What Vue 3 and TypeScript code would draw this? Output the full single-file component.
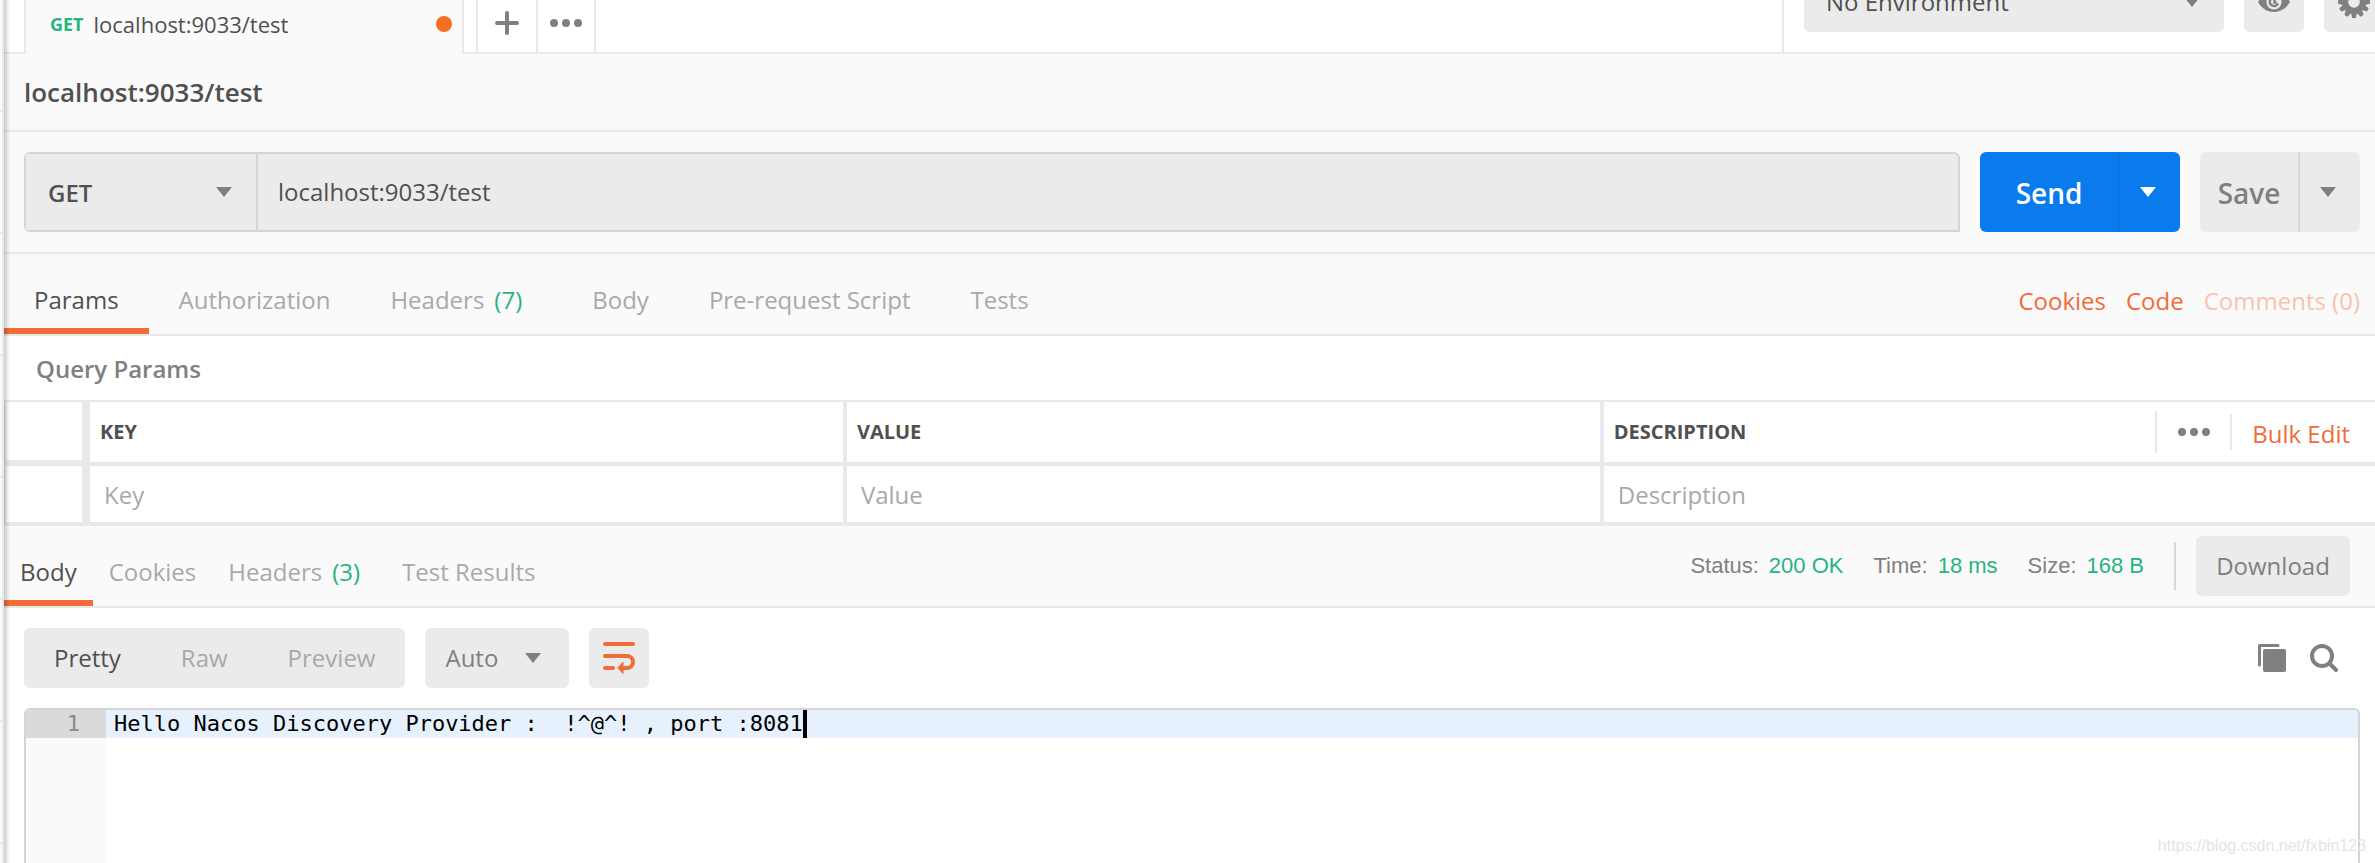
<script setup lang="ts">
import { ref } from 'vue'

interface Tab { label: string; count?: number }

const requestTabs: Tab[] = [
  { label: 'Params' },
  { label: 'Authorization' },
  { label: 'Headers', count: 7 },
  { label: 'Body' },
  { label: 'Pre-request Script' },
  { label: 'Tests' },
]
const responseTabs: Tab[] = [
  { label: 'Body' },
  { label: 'Cookies' },
  { label: 'Headers', count: 3 },
  { label: 'Test Results' },
]
const viewModes = ['Pretty', 'Raw', 'Preview']
const stats = [
  { name: 'Status:', value: '200 OK' },
  { name: 'Time:', value: '18 ms' },
  { name: 'Size:', value: '168 B' },
]

const activeRequestTab = ref('Params')
const activeResponseTab = ref('Body')
const viewMode = ref('Pretty')
const method = ref('GET')
const url = ref('localhost:9033/test')
const environment = ref('No Environment')
const format = ref('Auto')
const lines = ['Hello Nacos Discovery Provider :  !^@^! , port :8081']
</script>

<template>
  <div class="app">
    <aside class="sidebar" aria-hidden="true"></aside>
    <main class="main">
      <header class="topbar">
        <div class="tab-lead"></div>
        <button class="file-tab">
          <span class="verb">GET</span>
          <span class="file-name">localhost:9033/test</span>
          <span class="dirty"></span>
        </button>
        <div class="tab-gap"></div>
        <button class="tab-btn" aria-label="New tab">
          <svg width="24" height="24" viewBox="0 0 24 24"><path d="M12 2v20M2 12h20" stroke="#808080" stroke-width="4" stroke-linecap="round" /></svg>
        </button>
        <button class="tab-btn" aria-label="More tabs">
          <svg width="32" height="8" viewBox="0 0 32 8" fill="#808080"><circle cx="4" cy="4" r="4" /><circle cx="16" cy="4" r="4" /><circle cx="28" cy="4" r="4" /></svg>
        </button>
        <div class="tab-fill"></div>
        <div class="env">
          <div class="select env-select">
            <select v-model="environment" aria-label="Environment"><option>No Environment</option></select>
            <svg class="caret" width="16" height="10" viewBox="0 0 16 10"><path d="M0 0h16l-8 10z" /></svg>
          </div>
          <button class="icon-btn" aria-label="Environment quick look">
            <svg width="32" height="24" viewBox="0 0 32 24"><path d="M0 12C4 5 10 2 16 2s12 3 16 10c-4 7-10 10-16 10S4 19 0 12z" fill="#808080" /><circle cx="16" cy="12" r="7.500" fill="#ebebeb" /><path d="M14 8a4.300 4.300 0 1 0 6 5.500M16.500 9v3.500h2" fill="none" stroke="#808080" stroke-width="2.500" /></svg>
          </button>
          <button class="icon-btn" aria-label="Settings">
            <svg width="32" height="32" viewBox="-16 -16 32 32" fill="#808080"><circle r="8.800" fill="none" stroke="#808080" stroke-width="6" /><path v-for="n in 12" :key="n" d="M-3-11h6L1.800-16h-3.600z" :transform="`rotate(${n * 30})`" /></svg>
          </button>
        </div>
      </header>

      <h1 class="title">localhost:9033/test</h1>

      <form class="request" @submit.prevent>
        <div class="url-box">
          <div class="select method">
            <select v-model="method" aria-label="Method"><option>GET</option><option>POST</option></select>
            <svg class="caret" width="16" height="10" viewBox="0 0 16 10"><path d="M0 0h16l-8 10z" /></svg>
          </div>
          <input v-model="url" class="url" type="text" aria-label="Request URL" />
        </div>
        <div class="split send">
          <button type="submit" class="split-main">Send</button>
          <button type="button" class="split-more" aria-label="Send options">
            <svg width="16" height="10" viewBox="0 0 16 10"><path d="M0 0h16l-8 10z" /></svg>
          </button>
        </div>
        <div class="split save">
          <button type="button" class="split-main">Save</button>
          <button type="button" class="split-more" aria-label="Save options">
            <svg width="16" height="10" viewBox="0 0 16 10"><path d="M0 0h16l-8 10z" /></svg>
          </button>
        </div>
      </form>

      <nav class="tabs request-tabs">
        <button v-for="t in requestTabs" :key="t.label" class="tab" :class="{ active: t.label === activeRequestTab }" @click="activeRequestTab = t.label">
          {{ t.label }}<span v-if="t.count" class="count">({{ t.count }})</span>
        </button>
        <div class="links">
          <a href="#cookies">Cookies</a>
          <a href="#code">Code</a>
          <a href="#comments" class="faded">Comments (0)</a>
        </div>
      </nav>

      <section class="params">
        <h2 class="params-title">Query Params</h2>
        <table class="grid">
          <colgroup><col class="c-check" /><col class="c-key" /><col class="c-key" /><col /></colgroup>
          <thead>
            <tr>
              <th class="check"></th>
              <th>KEY</th>
              <th>VALUE</th>
              <th>
                <div class="desc-head">
                  <span>DESCRIPTION</span>
                  <button class="dots" aria-label="Column options">
                    <svg width="32" height="10" viewBox="0 0 32 10" fill="#808080"><circle cx="4" cy="5" r="4" /><circle cx="16" cy="5" r="4" /><circle cx="28" cy="5" r="4" /></svg>
                  </button>
                  <a class="bulk" href="#bulk">Bulk Edit</a>
                </div>
              </th>
            </tr>
          </thead>
          <tbody>
            <tr>
              <td class="check"></td>
              <td><input type="text" placeholder="Key" aria-label="Key" /></td>
              <td><input type="text" placeholder="Value" aria-label="Value" /></td>
              <td><input type="text" placeholder="Description" aria-label="Description" /></td>
            </tr>
          </tbody>
        </table>
      </section>

      <nav class="tabs response-tabs">
        <button v-for="t in responseTabs" :key="t.label" class="tab" :class="{ active: t.label === activeResponseTab }" @click="activeResponseTab = t.label">
          {{ t.label }}<span v-if="t.count" class="count">({{ t.count }})</span>
        </button>
        <dl class="stats">
          <div v-for="s in stats" :key="s.name" class="stat"><dt>{{ s.name }}</dt><dd>{{ s.value }}</dd></div>
        </dl>
        <span class="divider"></span>
        <button class="download">Download</button>
      </nav>

      <section class="response">
        <div class="toolbar">
          <div class="modes">
            <button v-for="m in viewModes" :key="m" :class="{ active: m === viewMode }" @click="viewMode = m">{{ m }}</button>
          </div>
          <div class="select format">
            <select v-model="format" aria-label="Format"><option>Auto</option><option>JSON</option></select>
            <svg class="caret" width="16" height="10" viewBox="0 0 16 10"><path d="M0 0h16l-8 10z" /></svg>
          </div>
          <button class="icon-btn wrap" aria-label="Wrap lines">
            <svg width="32" height="32" viewBox="0 0 32 32" fill="none" stroke="#f26b3a" stroke-width="4" stroke-linecap="round"><path d="M2 2h28M2 14h22a6 6 0 0 1 0 12h-4M2 26h8" /><path d="M20 20.500v11l-5-5.500z" fill="#f26b3a" stroke-width="1" stroke-linejoin="round" /></svg>
          </button>
          <div class="tools">
            <button aria-label="Copy">
              <svg width="28" height="28" viewBox="0 0 28 28"><path d="M1.500 21V1.500H20" fill="none" stroke="#808080" stroke-width="3" stroke-linecap="round" stroke-linejoin="round" /><rect x="5" y="5" width="23" height="23" rx="2" fill="#808080" /></svg>
            </button>
            <button aria-label="Search">
              <svg width="28" height="28" viewBox="0 0 28 28" fill="none" stroke="#808080" stroke-width="4" stroke-linecap="round"><circle cx="12" cy="12" r="10" /><path d="M20 20l6 6" /></svg>
            </button>
          </div>
        </div>
        <div class="editor">
          <div class="gutter"><div v-for="(_, i) in lines" :key="i" class="num">{{ i + 1 }}</div></div>
          <div class="code"><div v-for="(l, i) in lines" :key="i" class="line">{{ l }}<span class="cursor"></span></div></div>
        </div>
      </section>
    </main>
    <div class="watermark">https://blog.csdn.net/fxbin123</div>
  </div>
</template>

<style>
html, body { margin: 0; height: 100%; overflow: hidden; }
#app { height: 100%; }
</style>

<style scoped>
.app {
  --line: #e9e9e9;
  --panel: #fafafa;
  --control: #ebebeb;
  --ink: #505050;
  --mid: #808080;
  --soft: #a9a9a9;
  --orange: #f26b3a;
  --green: #26b47f;
  position: relative;
  display: flex;
  height: 100vh;
  overflow: hidden;
  background: #fff;
  color: var(--ink);
  font-family: "Open Sans", "Noto Sans", sans-serif;
  font-size: 24px;
  line-height: 32px;
}
*, *::before, *::after { box-sizing: border-box; }
button, input, select { font: inherit; color: inherit; border: 0; background: none; padding: 0; margin: 0; outline: 0; border-radius: 0; }
select { appearance: none; width: 100%; height: 100%; }
a { color: var(--orange); text-decoration: none; }
svg { display: block; flex: none; }

.sidebar {
  flex: 0 0 4px;
  border-right: 2px solid var(--line);
  background: repeating-linear-gradient(#fafafa 0 120px, var(--line) 120px 122px) 0 -10px / 100% 122px;
}
.main {
  position: relative;
  flex: 1;
  min-width: 0;
  display: flex;
  flex-direction: column;
}
.main::before {
  content: "";
  position: absolute;
  inset: 0 auto 0 0;
  width: 6px;
  background: linear-gradient(90deg, rgba(0, 0, 0, 0.2), transparent);
  z-index: 1;
}

.topbar { display: flex; height: 54px; flex: none; }
.topbar > * { border-bottom: 2px solid var(--line); }
.tab-lead { width: 22px; border-right: 2px solid var(--line); }
.file-tab {
  display: flex;
  align-items: center;
  width: 436px;
  padding: 0 10px 4px 24px;
  background: var(--panel);
  border-bottom-color: var(--panel);
  font-size: 22px;
}
.verb { color: var(--green); font-size: 18px; font-weight: 700; margin-right: 10px; }
.dirty { width: 16px; height: 16px; border-radius: 50%; background: #f47023; margin-left: auto; }
.tab-gap { width: 16px; border: solid var(--line); border-width: 0 2px 2px; }
.tab-btn { display: flex; align-items: center; justify-content: center; width: 60px; padding-bottom: 6px; border-right: 2px solid var(--line); }
.tab-btn + .tab-btn { width: 58px; }
.tab-fill { flex: 1; }
.env { display: flex; gap: 20px; padding-left: 20px; border-left: 2px solid var(--line); align-items: flex-end; padding-bottom: 20px; }
.select { position: relative; background: var(--control); border-radius: 6px; }
.caret { position: absolute; right: 24px; top: 50%; margin-top: -5px; fill: var(--mid); pointer-events: none; }
.env-select { width: 420px; height: 60px; }
.env-select select { padding: 0 22px; font-weight: 500; }
.icon-btn { display: flex; align-items: center; justify-content: center; width: 60px; height: 60px; background: var(--control); border-radius: 6px; }
.env .icon-btn:last-child { margin-right: -9px; }

.title { margin: 0; height: 78px; flex: none; padding: 22px 20px; background: var(--panel); border-bottom: 2px solid var(--line); font-size: 26px; font-weight: 600; }

.request { display: flex; gap: 20px; padding: 20px 15px 20px 20px; background: var(--panel); border-bottom: 2px solid var(--line); }
.url-box { display: flex; flex: 1; min-width: 0; height: 80px; border: 2px solid #d4d4d4; border-radius: 6px 6px 0 6px; background: var(--control); }
.method { width: 232px; border-right: 2px solid #d4d4d4; border-radius: 0; }
.method select { padding: 2px 22px 0; font-weight: 600; }
.url { flex: 1; min-width: 0; padding: 0 20px; }
.split { display: flex; height: 80px; border-radius: 6px; overflow: hidden; font-size: 28px; font-weight: 600; }
.split-main { padding-top: 2px; }
.split-more { display: flex; align-items: center; justify-content: center; width: 62px; padding-right: 4px; fill: currentColor; border-left: 2px solid #0d72de; }
.send { background: #097bed; color: #fff; }
.send .split-main { width: 138px; }
.save { background: var(--control); color: var(--mid); }
.save .split-main { width: 98px; }
.save .split-more { border-color: #d8d8d8; }

.tabs { display: flex; height: 82px; flex: none; background: var(--panel); border-bottom: 2px solid var(--line); color: var(--soft); }
.tab { padding: 18px 30px 0; border-bottom: 6px solid transparent; white-space: nowrap; }
.tab.active { color: var(--ink); border-bottom-color: var(--orange); }
.count { color: var(--green); margin: 0 10px; }
.links { display: flex; align-items: center; gap: 20px; margin-left: auto; padding: 14px 15px 0 0; }
.faded { color: #f8c3ad; }

.params-title { margin: 0; height: 64px; padding: 17px 32px; font-size: 24px; font-weight: 600; color: var(--mid); }
.grid { width: 100%; table-layout: fixed; border-collapse: separate; border-spacing: 0; border-top: 2px solid var(--line); border-left: 2px solid var(--line); }
.c-check { width: 84px; }
.c-key { width: 31.95%; }
th, td { padding: 0 0 0 10px; border-bottom: 4px solid var(--line); border-right: 4px solid var(--line); text-align: left; }
th { height: 64px; font-size: 20px; font-weight: 700; }
td { height: 60px; }
th:last-child, td:last-child { border-right: 0; }
.check { border-right-width: 8px; }
th.check { border-bottom-width: 6px; }
td input { display: block; width: 100%; height: 56px; padding: 0 4px; }
td input::placeholder { color: var(--soft); opacity: 1; }
.desc-head { display: flex; align-items: center; height: 60px; padding-right: 25px; }
.dots { display: flex; align-items: center; justify-content: center; width: 75px; height: 42px; margin-left: auto; border-left: 2px solid var(--line); }
.bulk { padding: 4px 0 0 20px; border-left: 2px solid var(--line); font-size: 24px; font-weight: 400; }

.response-tabs .tab { padding: 18px 16px 0; }
.stats { display: flex; gap: 30px; margin: 0 0 0 auto; padding: 24px 30px 0 0; font: 22px/32px "Liberation Sans", Arial, sans-serif; color: var(--mid); }
.stat { display: flex; gap: 10px; }
.stat dd { margin: 0; color: var(--green); }
.divider { align-self: center; width: 2px; height: 48px; background: #d8d8d8; }
.download { align-self: center; width: 154px; height: 60px; margin: 0 25px 0 20px; border-radius: 6px; background: var(--control); color: var(--mid); }

.response { flex: 1; min-height: 0; display: flex; flex-direction: column; padding: 20px 15px 0 20px; }
.toolbar { display: flex; gap: 20px; flex: none; }
.modes { display: flex; height: 60px; border-radius: 6px; background: var(--control); color: var(--soft); }
.modes button { padding: 0 30px; }
.modes .active { color: var(--ink); }
.format { width: 144px; height: 60px; color: var(--mid); }
.format select { padding: 0 20px; }
.format .caret { right: 28px; }
.tools { display: flex; gap: 24px; align-items: center; margin-left: auto; padding-right: 22px; }
.editor { flex: 1; display: flex; margin-top: 20px; border: solid #d4d4d4; border-width: 2px 2px 0; border-radius: 6px 6px 0 0; overflow: hidden; font: 22px/28px "DejaVu Sans Mono", monospace; color: #000; }
.gutter { width: 80px; background: var(--panel); color: #8a8a8a; text-align: right; }
.num { padding-right: 26px; background: #dadada; }
.code { flex: 1; }
.line { display: flex; height: 28px; padding-left: 8px; background: #e7f1fe; white-space: pre; }
.cursor { width: 4px; height: 28px; background: #000; }
.watermark { position: absolute; right: 9px; bottom: 3px; font: 16px/28px "Liberation Sans", Arial, sans-serif; color: #e4e4e4; }
</style>
